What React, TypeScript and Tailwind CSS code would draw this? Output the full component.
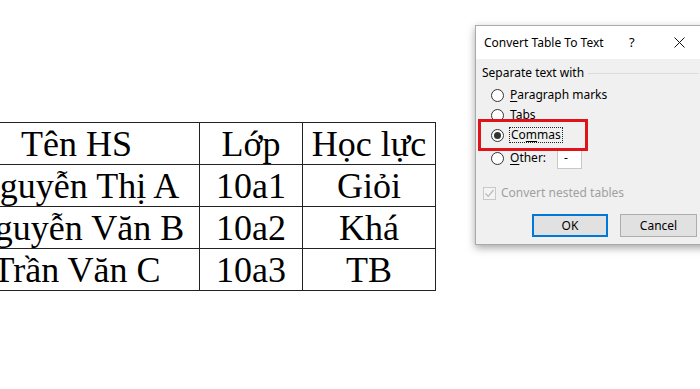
import React from 'react';

const rows = [
  ['Tên HS', 'Lớp', 'Học lực'],
  ['Nguyễn Thị A', '10a1', 'Giỏi'],
  ['Nguyễn Văn B', '10a2', 'Khá'],
  ['Trần Văn C', '10a3', 'TB'],
];

const Radio = ({ checked = false }: { checked?: boolean }) => (
  <span className="w-[13px] h-[13px] rounded-full border border-[#333] bg-white flex items-center justify-center shrink-0">
    {checked && <span className="w-[7px] h-[7px] rounded-full bg-[#333]" />}
  </span>
);

const ConvertDialog = () => (
  <div
    className="relative w-[235px] shrink-0 mt-[25px] border border-[#aaa] shadow-[0_3px_8px_rgba(0,0,0,0.35)] text-[12px] text-black"
    style={{ fontFamily: '"Noto Sans", "Open Sans", sans-serif' }}
  >
    {/* title bar */}
    <div className="h-[33px] bg-white flex items-center pl-[8px]">
      <span className="w-[145px] shrink-0 whitespace-nowrap">Convert Table To Text</span>
      <span className="w-[45px] shrink-0 text-[13px]">?</span>
      <svg width="11" height="11" viewBox="0 0 11 11">
        <path d="M0.5 0.5 L10.5 10.5 M10.5 0.5 L0.5 10.5" stroke="#111" strokeWidth="1" fill="none" />
      </svg>
    </div>

    {/* body */}
    <div className="bg-[#f0f0f0] pl-[6px] pr-[10px] pt-[6px] pb-[7px]">
      <div className="flex items-center h-[16px] gap-[4px]">
        <span>Separate text with</span>
        <span className="flex-1 h-px bg-[#dcdcdc]" />
      </div>

      <div className="mt-[4px] pl-[9px]">
        <div className="h-[20px] flex items-center gap-[6px]">
          <Radio />
          <span><u className="underline-offset-2">P</u>aragraph marks</span>
        </div>
        <div className="h-[20px] flex items-center gap-[6px]">
          <Radio />
          <span><u className="underline-offset-2">T</u>abs</span>
        </div>
        <div className="h-[20px] flex items-center gap-[5px]">
          <Radio checked />
          <span className="border border-dotted border-[#222] px-[1px] leading-[14px]">
            Co<u className="underline-offset-2">m</u>mas
          </span>
        </div>
        <div className="h-[26px] flex items-center gap-[6px]">
          <Radio />
          <span className="w-[41px]"><u className="underline-offset-2">O</u>ther:</span>
          <span className="w-[25px] h-[21px] bg-white border border-[#c8c8c8] flex items-center pl-[6px]">-</span>
        </div>
      </div>

      <div className="mt-[14px] flex items-center gap-[5px] h-[16px] pl-[1px] text-[#a0a0a0]">
        <span className="w-[13px] h-[13px] border border-[#c8c8c8] bg-[#f4f4f4] flex items-center justify-center">
          <svg width="11" height="11" viewBox="0 0 11 11">
            <path d="M1.5 5.5 L4.2 8.3 L9.5 2" stroke="#b8b8b8" strokeWidth="1.2" fill="none" />
          </svg>
        </span>
        <span>Convert nested tables</span>
      </div>

      <div className="mt-[13px] flex gap-[12px] pl-[50px]">
        <button className="w-[76px] h-[23px] bg-[#e1e1e1] border-2 border-[#0078d7] flex items-center justify-center">
          OK
        </button>
        <button className="w-[77px] h-[23px] bg-[#e1e1e1] border border-[#adadad] flex items-center justify-center">
          Cancel
        </button>
      </div>
    </div>

    {/* red highlight around the chosen option */}
    <div className="absolute left-[2px] top-[93px] w-[110px] h-[32px] border-[3px] border-[#e0131b] pointer-events-none" />
  </div>
);

export default function App() {
  return (
    <div className="w-[700px] h-[389px] bg-white overflow-hidden flex items-start">
      <div className="w-[475px] shrink-0 pt-[122px]">
        <table
          className="border-collapse ml-[-47px] text-[36px] leading-none text-black"
          style={{ fontFamily: '"Liberation Serif", "Times New Roman", serif' }}
        >
          <tbody>
            {rows.map((r, i) => (
              <tr key={i} className="h-[42px]">
                <td className="w-[246px] border border-[#222] text-center p-0 whitespace-nowrap">{r[0]}</td>
                <td className="w-[103px] border border-[#222] text-center p-0">{r[1]}</td>
                <td className="w-[133px] border border-[#222] text-center p-0">{r[2]}</td>
              </tr>
            ))}
          </tbody>
        </table>
      </div>
      <ConvertDialog />
    </div>
  );
}
